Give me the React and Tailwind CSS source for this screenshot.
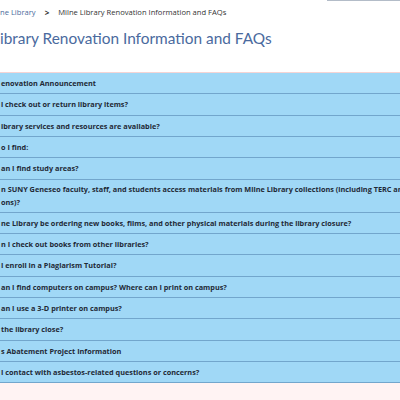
const faqs = [
  ['enovation Announcement'],
  ['l check out or return library items?'],
  ['ibrary services and resources are available?'],
  ['o I find:'],
  ['an I find study areas?'],
  [
    'n SUNY Geneseo faculty, staff, and students access materials from Milne Library collections (including TERC and',
    'ons)?',
  ],
  ['ne Library be ordering new books, films, and other physical materials during the library closure?'],
  ['n I check out books from other libraries?'],
  ['I enroll in a Plagiarism Tutorial?'],
  ['an I find computers on campus? Where can I print on campus?'],
  ['an I use a 3-D printer on campus?'],
  [' the library close?'],
  ['s Abatement Project Information'],
  ['I contact with asbestos-related questions or concerns?'],
];

export default function App() {
  return (
    <div className="w-[400px] h-[400px] overflow-hidden bg-white" style={{ fontFamily: '"Open Sans", sans-serif' }}>
      <div className="relative h-[72px]">
        <div className="absolute top-0 left-[327px] right-0 h-px bg-[#b3bcc8]" />
        <div className="flex items-center pt-[7px] h-[19px] text-[7.6px] whitespace-nowrap">
          <span className="text-[#4a6a9c]">ne Library</span>
          <span className="ml-[9px] mr-[9px] text-[#333] font-bold text-[8px]">&gt;</span>
          <span className="text-[#333]">Milne Library Renovation Information and FAQs</span>
        </div>
        <h1
          className="mt-[9px] text-[15.4px] leading-[20px] text-[#4a6a9e] whitespace-nowrap"
          style={{ fontFamily: 'Lato, sans-serif' }}
        >
          ibrary Renovation Information and FAQs
        </h1>
      </div>
      <div className="h-px bg-[#f5d4d4]" />
      <div className="bg-[#a0d8f6]">
        {faqs.map((lines, i) => (
          <div
            key={i}
            className={`flex flex-col justify-center border-b border-[#72a6cc] pl-[1px] text-[7.3px] leading-[12.6px] font-bold text-[#1f2a36] whitespace-nowrap ${
              lines.length > 1 ? 'h-[33px]' : 'h-[21.35px]'
            }`}
          >
            {lines.map((l, j) => (
              <div key={j}>{l}</div>
            ))}
          </div>
        ))}
      </div>
      <div className="h-[40px] bg-[#fff3f3]" />
    </div>
  );
}
